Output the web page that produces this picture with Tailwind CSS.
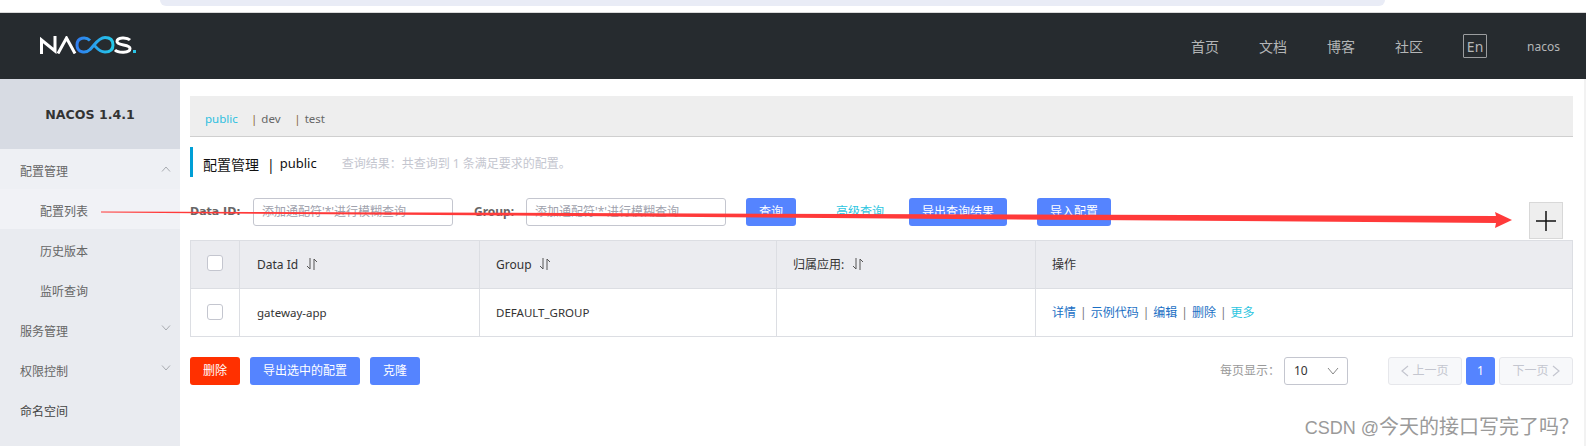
<!DOCTYPE html>
<html><head><meta charset="utf-8"><script src="https://cdn.jsdelivr.net/npm/@tailwindcss/browser@4"></script></head>
<body class="bg-white overflow-hidden">
<div class="relative w-[1586px] h-[446px] overflow-hidden bg-white font-['Noto_Sans','Noto_Sans_CJK_SC',sans-serif] text-[12px] text-[#333]">
  <div class="h-[13px] pl-[160px] border-b border-[#d9d9d9]">
    <div class="w-[1225px] h-[6px] bg-[#e9ecf6] rounded-b-[10px]"></div>
  </div>
  <header class="h-[66px] bg-[#262b2f] flex items-center pl-[40px] pr-[26px]">
    <svg width="96" height="18" viewBox="0 0 96 18" fill="none" class="mr-auto mb-[2px]">
      <defs><linearGradient id="g" x1="0" x2="1"><stop offset="0" stop-color="#2f7ef0"/><stop offset="1" stop-color="#24c8e8"/></linearGradient></defs>
      <path d="M1.5 18V4L15 15V0" stroke="#fff" stroke-width="3"/>
      <path d="M18 17.5L26.5 2L35 17.5" stroke="#fff" stroke-width="3"/>
      <path d="M50 4.500C46 .5 37 1 37 9C37 17 46 17.500 50 13.500C54 10 58 1.500 65 1.500C71 1.500 73 5 73 9C73 13 71 16 65 16C59 16 57 12 54 9" stroke="url(#g)" stroke-width="3"/>
      <path d="M90 4C87 1 77 1 77 5.500C77 10 90 8 90 12.500C90 17.500 78 17 75 14" stroke="#fff" stroke-width="3"/>
      <rect x="93" y="14" width="3" height="3" fill="#2ac4e6"/>
    </svg>
    <nav class="flex items-center text-[#b4b6b7] text-[14px]">
      <span class="w-[68px]">首页</span><span class="w-[68px]">文档</span><span class="w-[68px]">博客</span><span class="w-[68px]">社区</span>
      <span class="w-[24px] h-[24px] border border-[#9b9d9f] rounded-[1px] flex items-center justify-center text-[14px] mr-[40px]">En</span>
      <span class="text-[12px] mt-[1px]">nacos</span>
    </nav>
  </header>
  <div class="flex h-[367px]">
    <aside class="w-[180px] bg-[#e9ebf0] text-[#666] shrink-0">
      <div class="h-[70px] pt-[2px] bg-[#d7dbe3] flex items-center justify-center font-['DejaVu_Sans'] font-bold text-[12.6px] text-[#333]">NACOS 1.4.1</div>
      <div class="h-[40px] pt-[6px] pl-[20px] pr-[9px] flex items-center justify-between bg-[#eef0f4]">配置管理<svg class="mb-[6px]" width="10" height="6" viewBox="0 0 10 6" fill="none"><path d="M1 5.500L5 1L9 5.500" stroke="#a8abb0"/></svg></div>
      <div class="h-[40px] pt-[6px] pl-[40px] flex items-center bg-[#f1f2f6]">配置列表</div>
      <div class="h-[40px] pt-[6px] pl-[40px] flex items-center">历史版本</div>
      <div class="h-[40px] pt-[6px] pl-[40px] flex items-center">监听查询</div>
      <div class="h-[40px] pt-[6px] pl-[20px] pr-[9px] flex items-center justify-between">服务管理<svg class="mb-[8px]" width="10" height="6" viewBox="0 0 10 6" fill="none"><path d="M1 .5L5 5L9 .5" stroke="#a8abb0"/></svg></div>
      <div class="h-[40px] pt-[6px] pl-[20px] pr-[9px] flex items-center justify-between">权限控制<svg class="mb-[8px]" width="10" height="6" viewBox="0 0 10 6" fill="none"><path d="M1 .5L5 5L9 .5" stroke="#a8abb0"/></svg></div>
      <div class="h-[40px] pt-[6px] pl-[20px] flex items-center text-[#444]">命名空间</div>
    </aside>
    <main class="flex-1 pl-[10px] pr-[13px] pt-[17px]">
      <div class="h-[41px] bg-[#eeeeee] border-b border-[#cfcfcf] pl-[15px] pt-[5px] flex items-center text-[#666] text-[11.5px]">
        <span class="text-[#2cbfe0] w-[46px]">public</span><span class="text-[#8a6a3a] mr-[4px]">|</span><span class="w-[33px]">dev</span><span class="text-[#8a6a3a] mr-[4px]">|</span><span>test</span>
      </div>
      <div class="mt-[10px] h-[30px] pt-[4px] border-l-[3px] border-[#009fd6] pl-[10px] flex items-center">
        <span class="text-[14px] text-[#111]">配置管理</span><span class="text-[14px] text-[#111] ml-[8px] mr-[5px]">|</span><span class="text-[13px] text-[#111]">public</span>
        <span class="ml-[25px] text-[#c4c6cf]">查询结果：共查询到 1 条满足要求的配置。</span>
      </div>
      <div class="relative mt-[21px] h-[28px] flex items-center">
        <span class="font-['DejaVu_Sans'] font-bold text-[11px] text-[#666] w-[63px]">Data ID:</span>
        <div class="w-[200px] h-[28px] border border-[#c4c6cf] rounded-[3px] pl-[8px] flex items-center text-[#a0a2ad]">添加通配符'*'进行模糊查询</div>
        <span class="font-bold text-[#666] ml-[21px] w-[52px]">Group:</span>
        <div class="w-[200px] h-[28px] border border-[#c4c6cf] rounded-[3px] pl-[8px] flex items-center text-[#a0a2ad]">添加通配符'*'进行模糊查询</div>
        <button class="ml-[20px] w-[50px] h-[28px] rounded-[3px] bg-[#5584ff] text-white">查询</button>
        <span class="ml-[40px] text-[#2cc5e0] w-[73px]">高级查询</span>
        <button class="w-[98px] h-[28px] rounded-[3px] bg-[#5584ff] text-white">导出查询结果</button>
        <button class="ml-[30px] w-[74px] h-[28px] rounded-[3px] bg-[#5584ff] text-white">导入配置</button>
        <div class="absolute left-[1339px] top-[4px] w-[34px] h-[37px] bg-[#eeeeee] border border-[#d8d8d8] flex items-center justify-center">
          <svg width="20" height="20" viewBox="0 0 20 20"><path d="M10 0V20M0 10H20" stroke="#111" stroke-width="1.5"/></svg>
        </div>
      </div>
      <div class="mt-[14px] border border-[#dcdee3] grid grid-cols-[49px_240px_297px_259px_1fr] grid-rows-[48px_47px]">
        <div class="bg-[#ebecf0] border-r border-b border-[#dcdee3] flex items-center justify-center"><span class="w-[16px] h-[16px] mb-[4px] bg-white border border-[#c4c6cf] rounded-[3px]"></span></div>
        <div class="bg-[#ebecf0] border-r border-b border-[#dcdee3] flex items-center pl-[17px]">Data Id<svg class="ml-[8px] mb-[2px]" width="12" height="14" viewBox="0 0 12 14" fill="none"><path d="M4 1V12L1 9M8 13V2L11 5" stroke="#555"/></svg></div>
        <div class="bg-[#ebecf0] border-r border-b border-[#dcdee3] flex items-center pl-[16px]">Group<svg class="ml-[7px] mb-[2px]" width="12" height="14" viewBox="0 0 12 14" fill="none"><path d="M4 1V12L1 9M8 13V2L11 5" stroke="#555"/></svg></div>
        <div class="bg-[#ebecf0] border-r border-b border-[#dcdee3] flex items-center pl-[16px]">归属应用:<svg class="ml-[8px] mb-[2px]" width="12" height="14" viewBox="0 0 12 14" fill="none"><path d="M4 1V12L1 9M8 13V2L11 5" stroke="#555"/></svg></div>
        <div class="bg-[#ebecf0] border-b border-[#dcdee3] flex items-center pl-[16px]">操作</div>
        <div class="border-r border-[#dcdee3] flex items-center justify-center"><span class="w-[16px] h-[16px] mb-[2px] bg-white border border-[#c4c6cf] rounded-[3px]"></span></div>
        <div class="border-r border-[#dcdee3] flex items-center pl-[17px] text-[11.5px]">gateway-app</div>
        <div class="border-r border-[#dcdee3] flex items-center pl-[16px] text-[11.5px]">DEFAULT_GROUP</div>
        <div class="border-r border-[#dcdee3]"></div>
        <div class="flex items-center pl-[16px] text-[#1a6fc4]"><span>详情</span><span class="mx-[4px] text-[#777]">|</span><span>示例代码</span><span class="mx-[4px] text-[#777]">|</span><span>编辑</span><span class="mx-[4px] text-[#777]">|</span><span>删除</span><span class="mx-[4px] text-[#777]">|</span><span class="text-[#2cc5e0]">更多</span></div>
      </div>
      <div class="mt-[20px] flex items-center h-[28px]">
        <button class="w-[50px] h-[28px] rounded-[3px] bg-[#ff3000] text-white">删除</button>
        <button class="ml-[10px] w-[110px] h-[28px] rounded-[3px] bg-[#5584ff] text-white">导出选中的配置</button>
        <button class="ml-[10px] w-[50px] h-[28px] rounded-[3px] bg-[#5584ff] text-white">克隆</button>
        <span class="ml-auto text-[#999]">每页显示：</span>
        <div class="ml-[4px] w-[64px] h-[28px] border border-[#c4c6cf] rounded-[3px] pl-[9px] pr-[8px] flex items-center justify-between">10<svg width="12" height="8" viewBox="0 0 12 8" fill="none"><path d="M1 1L6 7L11 1" stroke="#888"/></svg></div>
        <div class="ml-[40px] w-[74px] h-[28px] bg-[#f7f8fa] border border-[#e6e7eb] rounded-[3px] flex items-center justify-center text-[#c4c6cf]"><svg class="mr-[3px]" width="8" height="12" viewBox="0 0 8 12" fill="none"><path d="M7 1L1 6L7 11" stroke="#c4c6cf" stroke-width="1.2"/></svg>上一页</div>
        <div class="ml-[4px] w-[29px] h-[28px] bg-[#5584ff] rounded-[3px] text-white flex items-center justify-center">1</div>
        <div class="ml-[4px] w-[74px] h-[28px] bg-[#f7f8fa] border border-[#e6e7eb] rounded-[3px] flex items-center justify-center text-[#c4c6cf]">下一页<svg class="ml-[3px]" width="8" height="12" viewBox="0 0 8 12" fill="none"><path d="M1 1L7 6L1 11" stroke="#c4c6cf" stroke-width="1.2"/></svg></div>
      </div>
    </main>
  </div>
  <svg class="absolute left-0 top-0 pointer-events-none" width="1586" height="446" viewBox="0 0 1586 446">
    <polygon points="101,211.5 1496,216 1495,212 1512,220 1495,228 1496,223 101,212.5" fill="#ff3a3a"/>
  </svg>
  <div class="absolute right-[7px] top-[415px] font-['Liberation_Sans','Noto_Sans_CJK_SC',sans-serif] text-[20px] leading-[24px] text-[#9a9a9a]"><span class="text-[18px]">CSDN @</span>今天的接口写完了吗？</div>
  <div class="absolute right-0 top-[79px] bottom-0 w-[2px] bg-[#f2f2f2]"></div>
</div>
</body></html>
